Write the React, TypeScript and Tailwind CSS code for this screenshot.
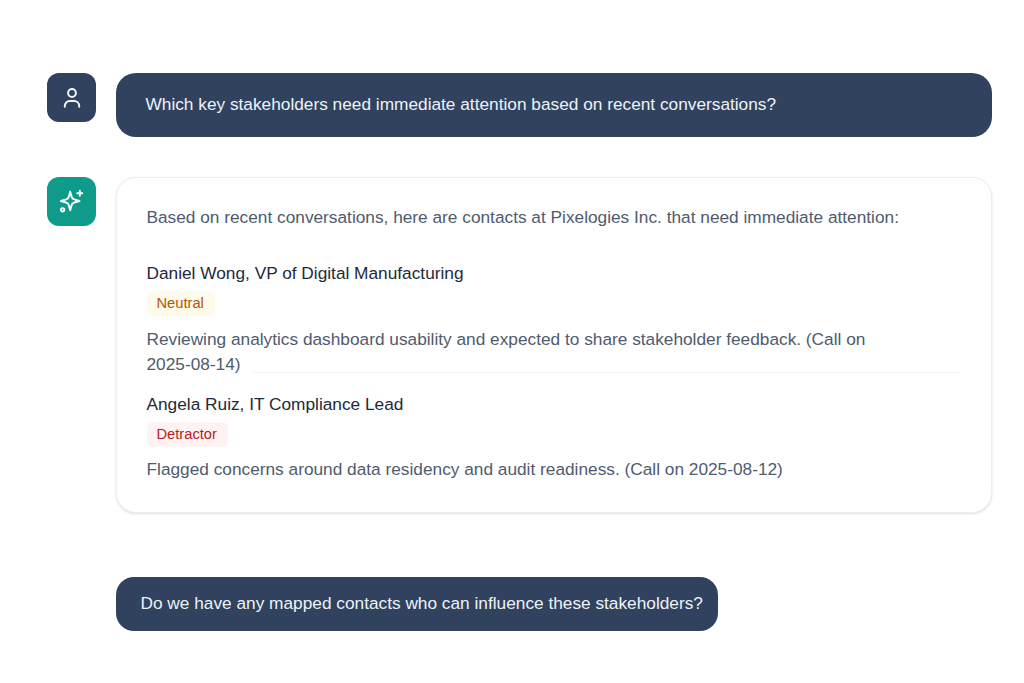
const App = () => {
  return (
    <main className="w-[1024px] h-[683px] bg-white pt-[73px] pl-[47px] pr-8 font-['Liberation_Sans',Arial,sans-serif] text-[17.28px]">
      {/* QUESTION */}
      <div className="flex gap-5">
        <div className="w-[49px] h-[49px] rounded-xl bg-[#30425e] flex items-center justify-center shrink-0">
          <svg width="24" height="24" viewBox="0 0 24 24" fill="none" stroke="#f1f5f9" strokeWidth="2" strokeLinecap="round">
            <circle cx="12" cy="7" r="3.9" />
            <path d="M4.8 20.7v-.7a5 5 0 0 1 5-5h4.4a5 5 0 0 1 5 5v.7" />
          </svg>
        </div>
        <div className="w-[876px] h-[64px] rounded-[20px] bg-[#30425e] text-[#eef2f6] flex items-center pl-[29.5px] pb-[1px]">
          Which key stakeholders need immediate attention based on recent conversations?
        </div>
      </div>

      {/* ANSWER */}
      <div className="flex gap-5 mt-10">
        <div className="w-[49px] h-[49px] rounded-xl bg-[#0f9b8a] flex items-center justify-center shrink-0">
          <svg width="26" height="26" viewBox="0 0 26 26" fill="none" stroke="#ffffff" strokeWidth="1.9" strokeLinecap="round" strokeLinejoin="round">
            <path d="M11.2 2.7l1.5 5.3a3.5 3.5 0 0 0 2.4 2.4l5.4 1.6-5.4 1.6a3.5 3.5 0 0 0-2.4 2.4l-1.5 5.3-1.5-5.3a3.5 3.5 0 0 0-2.4-2.4L1.9 12l5.4-1.6a3.5 3.5 0 0 0 2.4-2.4z" />
            <path d="M20.8 1.7v5M18.3 4.2h5" />
            <circle cx="3.6" cy="20.8" r="1.7" />
          </svg>
        </div>
        <div className="w-[876px] h-[336px] rounded-[20px] bg-white border-[1.5px] border-[#eceef1] shadow-sm pl-[29.5px] pr-[30px] pt-[26px] text-[#4f5b6e]">
          <p className="leading-[26px]">
            Based on recent conversations, here are contacts at Pixelogies Inc. that need immediate attention:
          </p>
          <p className="mt-[30px] leading-[26px] text-[#1e293b]">Daniel Wong, VP of Digital Manufacturing</p>
          <span className="block w-fit mt-[5px] pl-2.5 pr-[11px] h-[25px] leading-[25px] rounded-md bg-[#fffbeb] text-[#b45309] text-[14.7px]">Neutral</span>
          <p className="mt-[11px] leading-[25px] w-[760px]">
            Reviewing analytics dashboard usability and expected to share stakeholder feedback. (Call on 2025-08-14)
          </p>
          <div className="border-t border-gray-100 -mt-[5px] ml-[105px]"></div>
          <p className="mt-[18px] leading-[26px] text-[#1e293b]">Angela Ruiz, IT Compliance Lead</p>
          <span className="block w-fit mt-[5px] pl-2.5 pr-[11px] h-[25px] leading-[25px] rounded-md bg-[#fef2f2] text-[#b91c1c] text-[14.7px]">Detractor</span>
          <p className="mt-[10px] leading-[25px]">Flagged concerns around data residency and audit readiness. (Call on 2025-08-12)</p>
        </div>
      </div>

      {/* FOLLOW UP */}
      <div className="mt-16 ml-[69px] w-[602px] h-[54px] rounded-[18px] bg-[#30425e] text-[#eef2f6] flex items-center pl-[24.5px] pb-[1px]">
        Do we have any mapped contacts who can influence these stakeholders?
      </div>
    </main>
  );
};

export default App;
